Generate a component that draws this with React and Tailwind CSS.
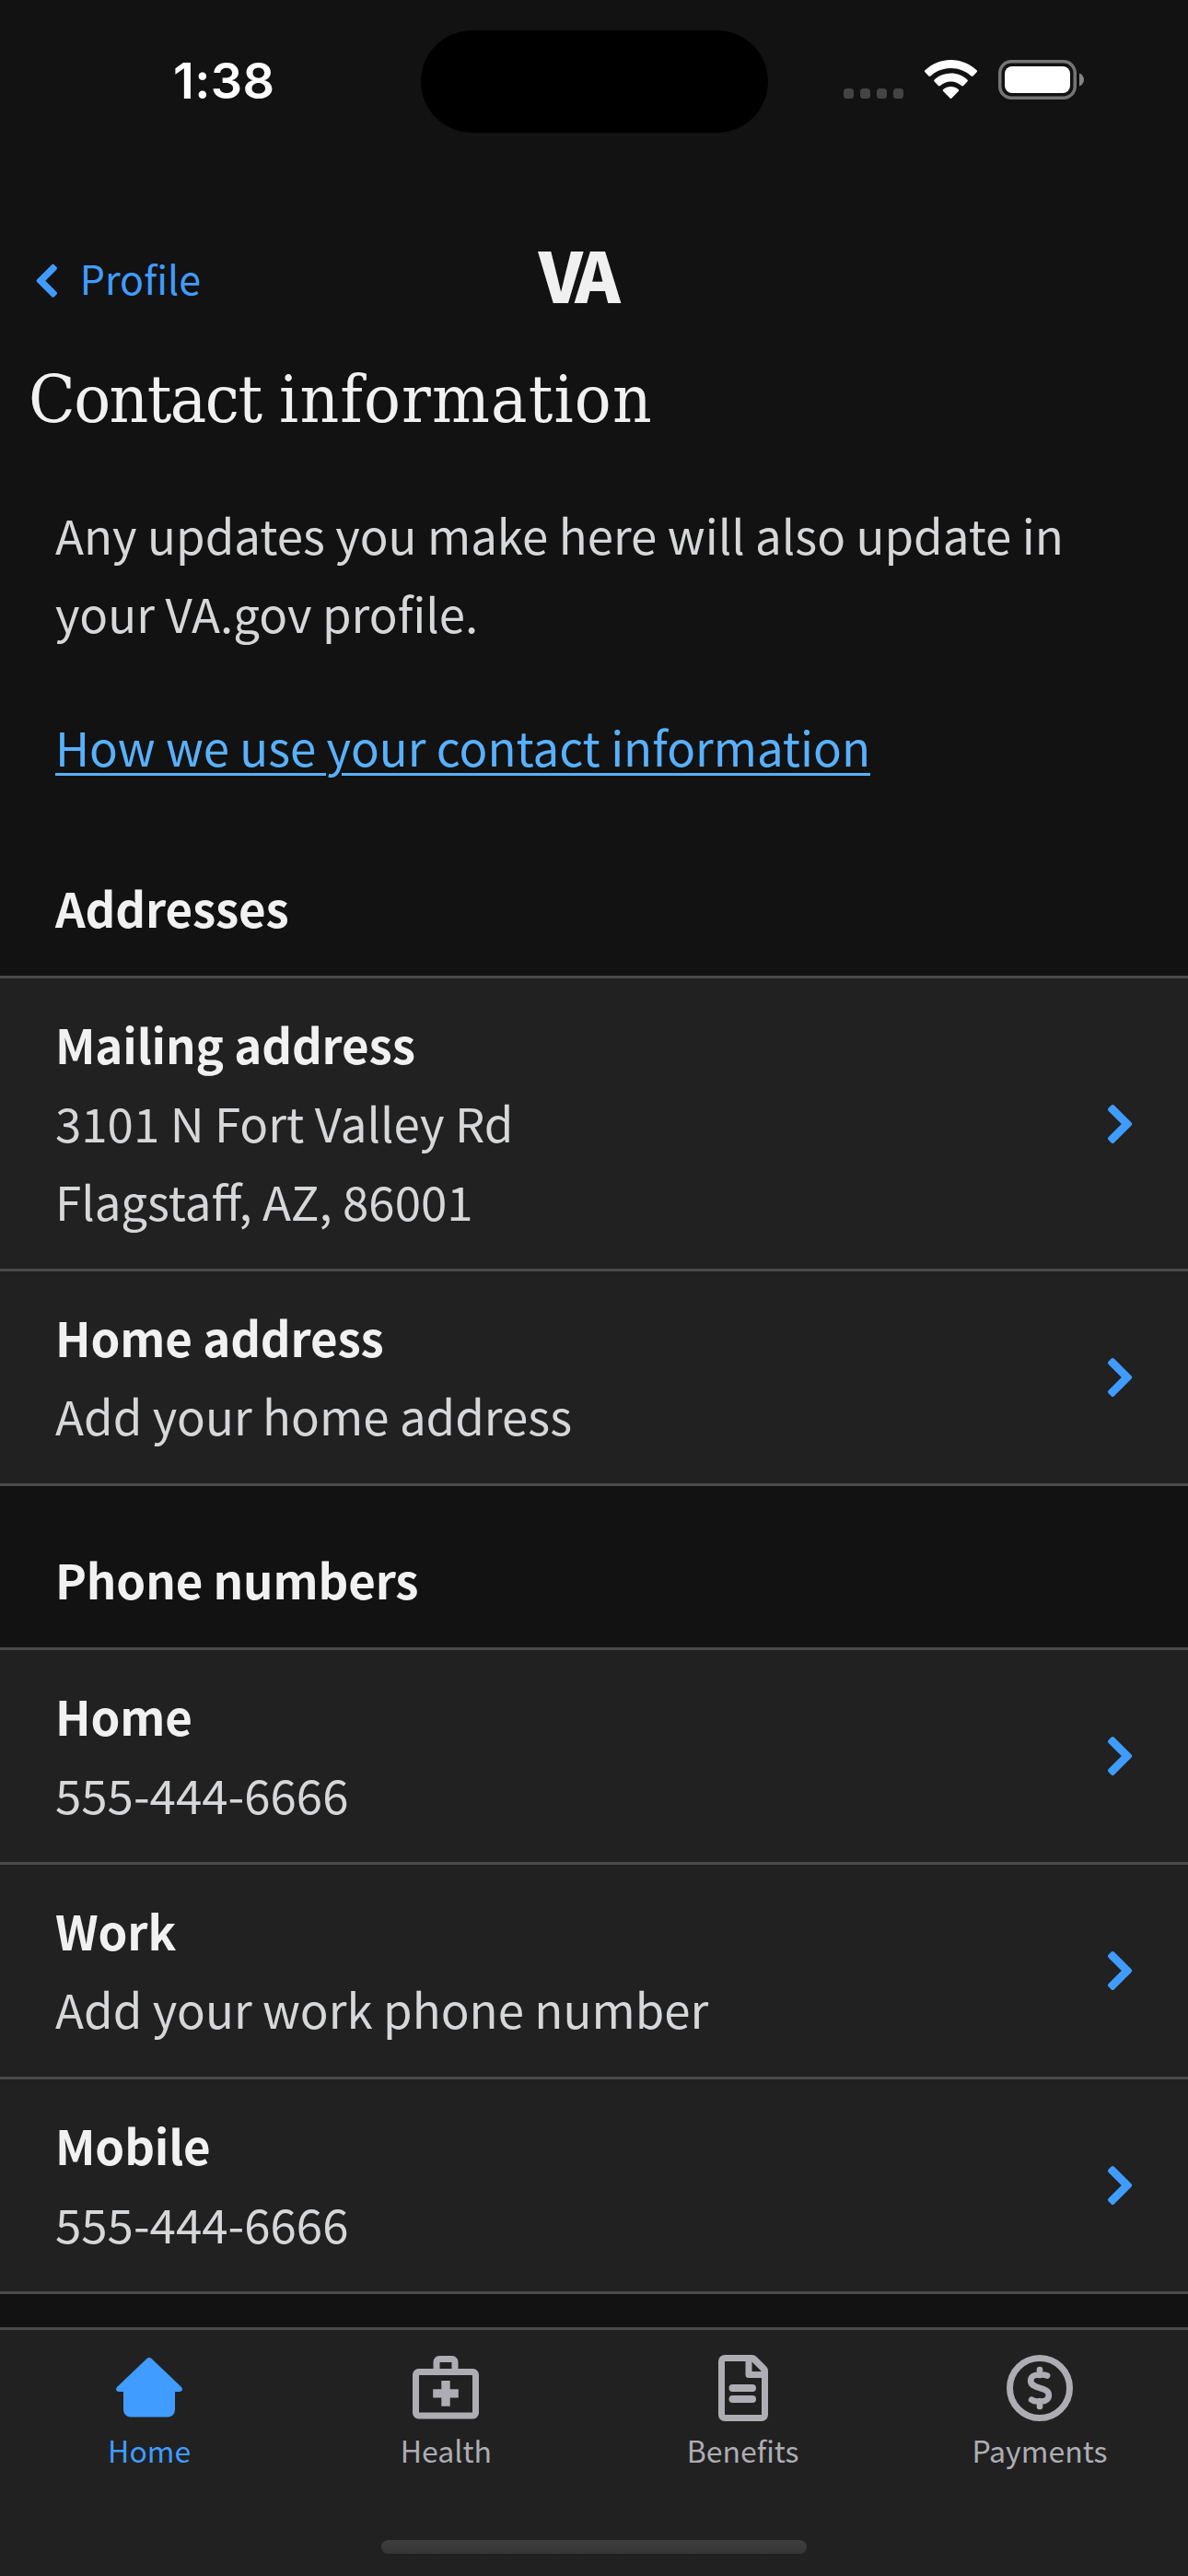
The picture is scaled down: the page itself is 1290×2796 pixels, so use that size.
const sans = "font-['Noto_Sans_CJK_SC','Noto_Sans',sans-serif]";

function StatusBar() {
  return (
    <header className="flex h-[177px] shrink-0 items-start">
      <div className="mt-[56px] ml-[188px] w-[269px] shrink-0 font-['Inter',sans-serif] text-[54px] leading-[64px] font-semibold tracking-[0.4px] text-white">
        1:38
      </div>
      <div className="mt-[33px] h-[111px] w-[377px] shrink-0 rounded-full bg-black" />
      <div className="mt-[96px] ml-[82px] flex gap-[7px]">
        {[0, 1, 2, 3].map((i) => (
          <span key={i} className="size-[11px] rounded-[3.5px] bg-[#444444]" />
        ))}
      </div>
      <svg className="mt-[65px] ml-[22px] shrink-0" width="59" height="43" viewBox="0 0 59 43" fill="white">
        <path d="M29.5 0C40 0 50 4 57.6 11.2c.6.6.6 1.4 0 2l-4 4.2c-.6.6-1.500.6-2.100 0C45.500 11.900 37.800 8.900 29.500 8.900S13.500 11.900 7.500 17.400c-.6.6-1.500.6-2.100 0l-4-4.200c-.6-.6-.6-1.400 0-2C9 4 19 0 29.500 0z" />
        <path d="M29.500 14.500c6.800 0 13 2.600 17.800 6.900.7.6.7 1.500.1 2.100l-4.300 4.500c-.6.6-1.400.6-2 .1-3.200-2.900-7.200-4.600-11.600-4.600s-8.400 1.700-11.600 4.600c-.6.5-1.400.5-2-.1l-4.300-4.500c-.6-.6-.6-1.500.1-2.100 4.800-4.300 11-6.900 17.800-6.900z" />
        <path d="M29.500 29c3.100 0 6 1.100 8.200 3 .7.600.700 1.500.1 2.100l-7.300 7.500c-.6.6-1.400.6-2 0l-7.300-7.500c-.6-.6-.6-1.500.1-2.100 2.200-1.900 5.100-3 8.200-3z" />
      </svg>
      <svg className="mt-[65px] ml-[22px] shrink-0" width="94" height="43" viewBox="0 0 94 43">
        <rect x="1.750" y="1.750" width="81.500" height="39.500" rx="12.500" fill="none" stroke="#757575" strokeWidth="3.500" />
        <rect x="7" y="7" width="71" height="29" rx="8" fill="white" />
        <path d="M88 14.500c3 1.100 5 3.800 5 7s-2 5.900-5 7z" fill="#858585" />
      </svg>
    </header>
  );
}

function Chevron({ className }) {
  return (
    <svg className={`shrink-0 text-[#409cff] ${className}`} viewBox="0 0 30 46" fill="currentColor" stroke="currentColor" strokeWidth="4" strokeLinejoin="round">
      <path d="M7.200 4 26.200 23 7.200 42 3.950 38.750 19.700 23 3.950 7.250z" />
    </svg>
  );
}

function NavBar() {
  return (
    <nav className="flex h-[207px] shrink-0 items-start">
      <Chevron className="mt-[108px] ml-[38px] h-[39.400px] w-[25.700px] -scale-x-100" />
      <a className="mt-[92px] ml-[23px] w-[498px] text-[43px] leading-[64px] text-[#409cff]">Profile</a>
      <div className="mt-[65px] text-[75px] leading-[110px] font-black tracking-[-7px] text-[#f0f0f0]">VA</div>
    </nav>
  );
}

function Row({ title, lines }) {
  return (
    <li className="flex items-center justify-between border-b-[3px] border-[#4b4b4b] bg-[#212121] pr-[59px] pl-[60px] leading-[85px]">
      <div className="pt-[29px] pb-[31px]">
        <h3 className="font-bold tracking-[-0.15px] text-[#f1f1f1]">{title}</h3>
        {lines.map((line) => (
          <p key={line}>{line}</p>
        ))}
      </div>
      <Chevron className="h-[46px] w-[30px]" />
    </li>
  );
}

function Section({ title, rows, className }) {
  return (
    <section>
      <h2 className={`pb-[31px] pl-[60px] leading-[85px] font-bold tracking-[-0.15px] text-[#f1f1f1] ${className}`}>{title}</h2>
      <ul className="border-t-[3px] border-[#4b4b4b]">
        {rows.map((row) => (
          <Row key={row.title} {...row} />
        ))}
      </ul>
    </section>
  );
}

const addresses = [
  { title: "Mailing address", lines: ["3101 N Fort Valley Rd", "Flagstaff, AZ, 86001"] },
  { title: "Home address", lines: ["Add your home address"] },
];

const phones = [
  { title: "Home", lines: ["555-444-6666"] },
  { title: "Work", lines: ["Add your work phone number"] },
  { title: "Mobile", lines: ["555-444-6666"] },
];

const tabs = [
  {
    label: "Home",
    color: "text-[#409cff]",
    icon: (
      <path fill="currentColor" d="M33.200 6.200c1.500-1.600 4.100-1.600 5.600 0l32 30.500c2.300 2.600 1 5.300-2.200 5.300H64v19.500a8 8 0 0 1-8 8H16a8 8 0 0 1-8-8V42H3.400C.2 42-1.100 39.300 1.200 36.700z" />
    ),
  },
  {
    label: "Health",
    color: "text-[#adadb3]",
    icon: (
      <>
        <rect x="3.500" y="20.500" width="65" height="47.500" rx="3" fill="none" stroke="currentColor" strokeWidth="7" />
        <path d="M26 20V9.500a3 3 0 0 1 3-3h14a3 3 0 0 1 3 3V20" fill="none" stroke="currentColor" strokeWidth="7" />
        <path d="M31.300 30h9.400v9.200h9.100v9.400h-9.100v9.200h-9.400v-9.200h-9.100v-9.400h9.100z" fill="currentColor" />
      </>
    ),
  },
  {
    label: "Benefits",
    color: "text-[#adadb3]",
    icon: (
      <>
        <path d="M16 2A7 7 0 0 0 9 9v58a7 7 0 0 0 7 7h40a7 7 0 0 0 7-7V19.500a7 7 0 0 0-2-5L50.500 4a7 7 0 0 0-5-2zm0 7h22.500v14.500a3.500 3.500 0 0 0 3.500 3.500h14V67H16zm29.500.500L56 20H45.500z" fill="currentColor" fillRule="evenodd" />
        <path d="M24.500 38h21.500M24.500 50h21.500" stroke="currentColor" strokeWidth="8" strokeLinecap="round" />
      </>
    ),
  },
  {
    label: "Payments",
    color: "text-[#adadb3]",
    icon: (
      <>
        <circle cx="36" cy="38" r="32.500" fill="none" stroke="currentColor" strokeWidth="7" />
        <path
          d="M36 18v6M36 52v6M44 24.500C42.500 23.800 41 23.500 38.500 23.500H34.500c-5 0-8.300 2.600-8.300 6.600 0 4.200 3.300 5.900 9.300 7.600 6.500 1.900 10.300 3.500 10.300 8 0 4.300-3.300 6.800-8.300 6.800H33c-2.500 0-4-.4-5.800-1.800"
          fill="none"
          stroke="currentColor"
          strokeWidth="6.700"
          strokeLinecap="round"
        />
      </>
    ),
  },
];

export default function App() {
  return (
    <div className={`flex h-[2796px] w-[1290px] flex-col overflow-hidden bg-[#121212] text-[51px] text-[#d6d7d9] ${sans}`}>
      <StatusBar />
      <NavBar />
      <main className="flex-1">
        <h1 className="ml-[31px] w-max origin-left scale-x-[0.935] font-['DejaVu_Serif',serif] text-[71px] leading-[100px] text-[#f1f1f1]">
          <span className="tracking-[-1.700px]">Contact </span>
          <span className="tracking-[1.200px]">information</span>
        </h1>
        <p className="mt-[54px] ml-[60px] w-[1170px] leading-[85px]">
          Any updates you make here will also update in your VA.gov profile.
        </p>
        <a className="mt-[60px] ml-[60px] block leading-[85px] tracking-[-0.040px] text-[#58b1ff] underline decoration-[3px] underline-offset-[7px]">
          How we use your contact information
        </a>
        <Section title="Addresses" rows={addresses} className="pt-[90px]" />
        <Section title="Phone numbers" rows={phones} className="pt-[59px]" />
      </main>
      <footer className="flex h-[270px] shrink-0 flex-col items-center border-t-[3px] border-[#4b4b4b] bg-[#212121]">
        <div className="grid h-[228px] w-full grid-cols-4 pl-[1px]">
          {tabs.map(({ label, color, icon }) => (
            <div key={label} className={`flex flex-col items-center pt-[25px] ${color}`}>
              <svg width="72" height="76" viewBox="0 0 72 76">{icon}</svg>
              <span className="mt-[5px] text-[32px] leading-[48px]">{label}</span>
            </div>
          ))}
        </div>
        <div className="h-[15px] w-[462px] rounded-full bg-linear-to-b from-[#3e3e3e] to-[#363636]" />
      </footer>
    </div>
  );
}
